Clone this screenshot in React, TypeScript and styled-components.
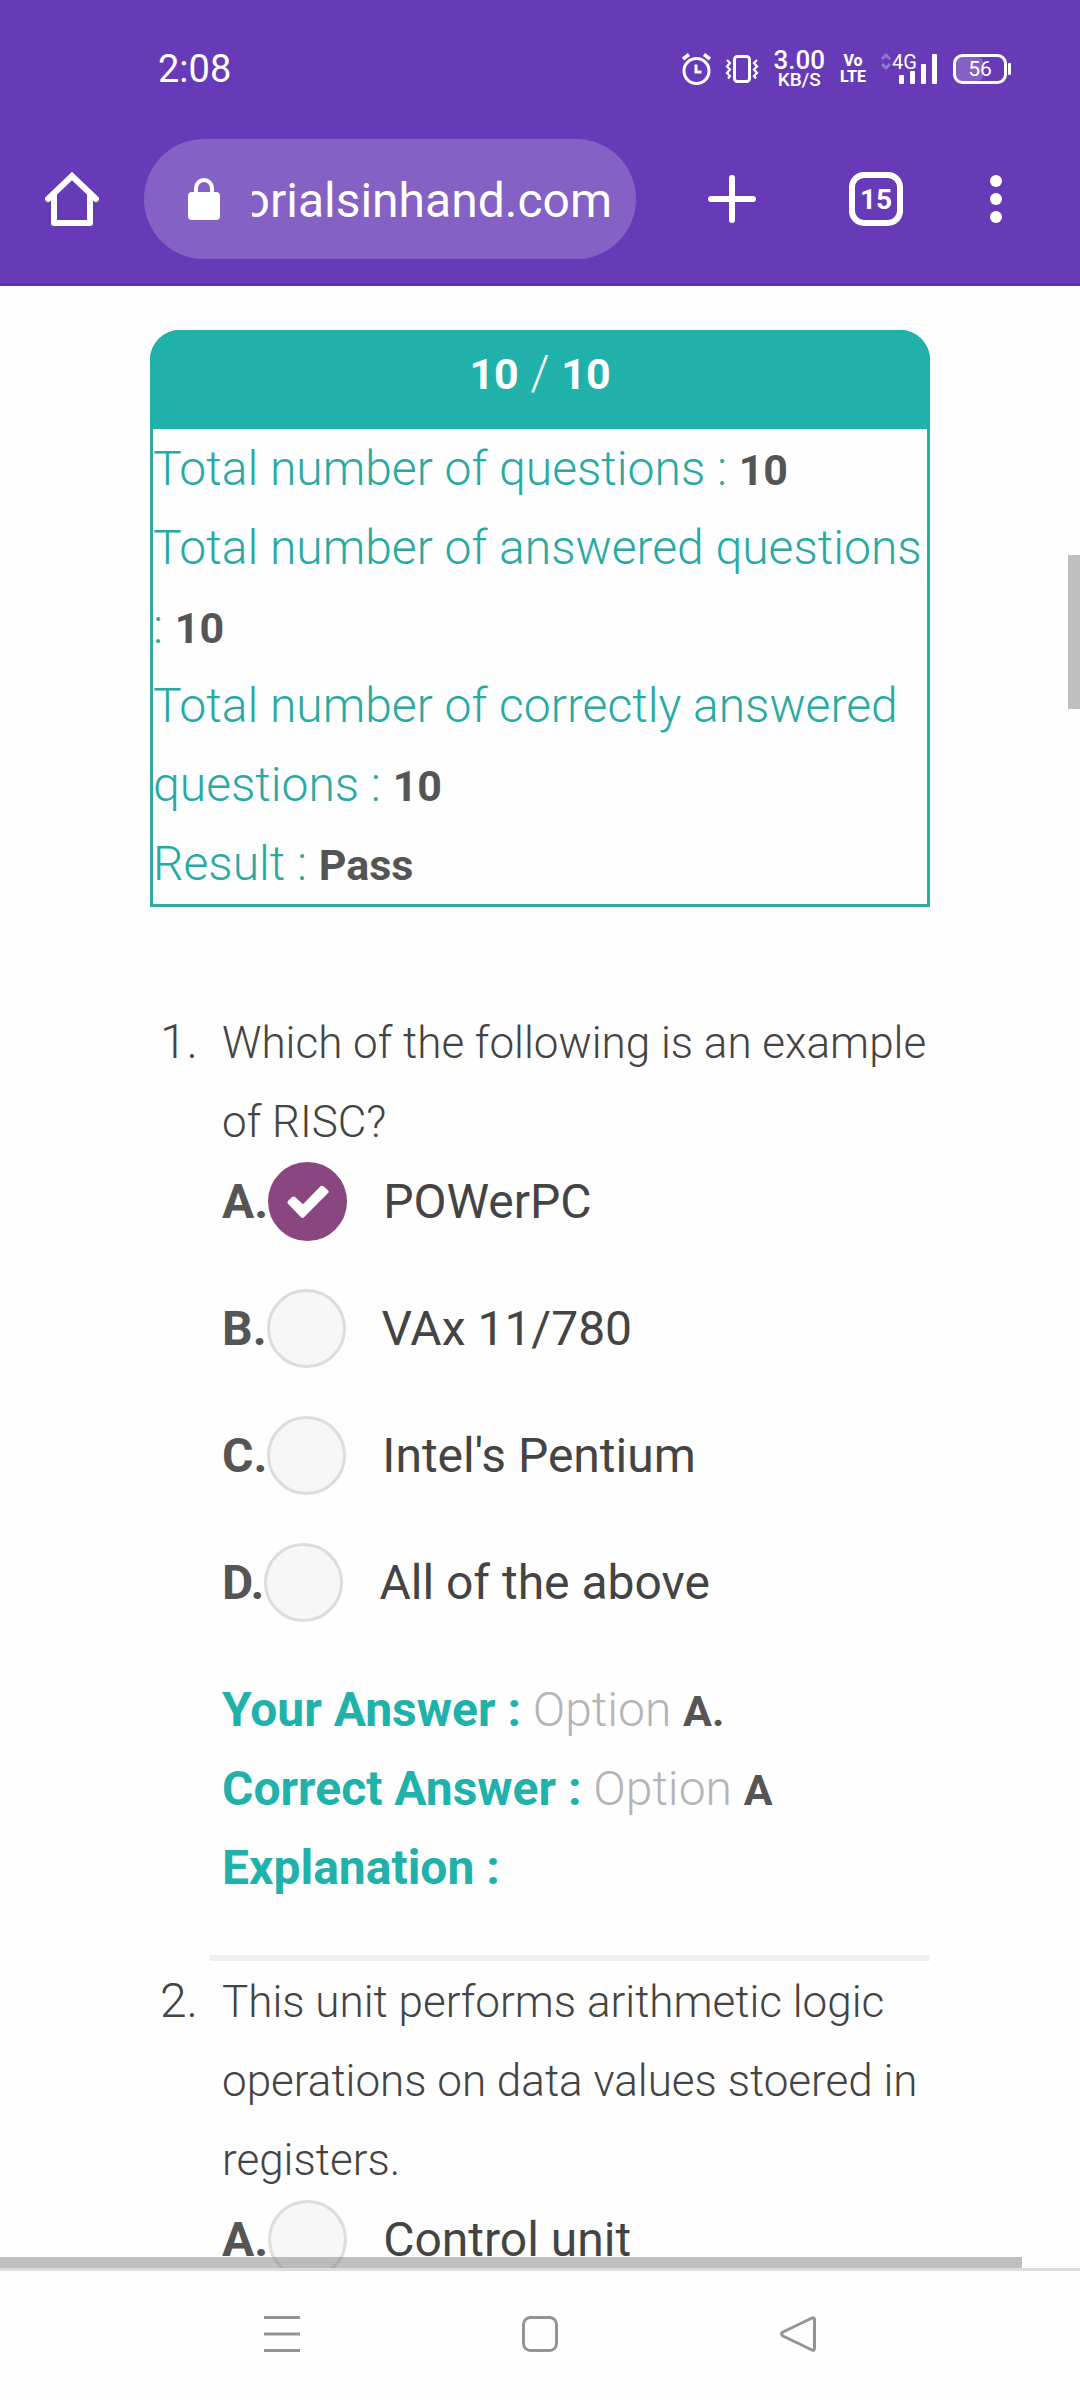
import React from 'react';
import styled, { createGlobalStyle } from 'styled-components';

const GlobalStyle = createGlobalStyle`
  *, *::before, *::after { box-sizing: border-box; }
  body {
    margin: 0;
    background: #fefefe;
    color: #444;
    font-family: Roboto, "Liberation Sans", sans-serif;
  }
`;

const Screen = styled.div`
  display: flex;
  flex-direction: column;
  height: 100vh;
  overflow: hidden;
`;

const Chrome = styled.header`
  flex: none;
  background: #673ab7;
  border-bottom: 3px solid #5c34a4;
  color: #fff;
`;

const StatusBar = styled.div`
  display: flex;
  align-items: center;
  height: 115px;
  padding: 23px 68px 0 158px;
`;

const Clock = styled.time`
  font-size: 38px;
  line-height: 40px;
`;

const StatusIcons = styled.div`
  display: flex;
  align-items: center;
  gap: 15px;
  margin-left: auto;

  svg { display: block; overflow: visible; }
`;

const Stack = styled.div<{ $size: number; $weight: number; $line: number }>`
  display: flex;
  flex-direction: column;
  align-items: center;
  font-size: ${(p) => p.$size}px;
  font-weight: ${(p) => p.$weight};
  line-height: ${(p) => p.$line}px;
`;

const Speed = styled.span`
  font-size: 26px;
  line-height: 21px;
`;

const Toolbar = styled.div`
  display: flex;
  align-items: center;
  height: 168px;
  padding-right: 36px;
`;

const IconButton = styled.button<{ $width?: number }>`
  display: flex;
  align-items: center;
  justify-content: center;
  flex: none;
  width: ${(p) => p.$width || 144}px;
  height: 120px;
  padding: 0;
  border: 0;
  background: none;
  color: inherit;
  font: inherit;
`;

const AddressBar = styled.label`
  display: flex;
  align-items: center;
  flex: 1;
  gap: 32px;
  min-width: 0;
  height: 120px;
  margin-right: 24px;
  padding: 0 24px 0 44px;
  border-radius: 60px;
  background: #8561c5;

  svg { flex: none; }
`;

const AddressInput = styled.input`
  flex: 1;
  min-width: 0;
  padding: 3px 0 0;
  border: 0;
  outline: 0;
  background: none;
  color: #fff;
  font: 400 48px/60px Roboto, "Liberation Sans", sans-serif;
  direction: rtl;
`;

const TabCount = styled.span`
  display: flex;
  align-items: center;
  justify-content: center;
  width: 54px;
  height: 54px;
  border: 6px solid #fff;
  border-radius: 15px;
  font-size: 28px;
  font-weight: 700;
`;

const Viewport = styled.main`
  position: relative;
  flex: 1;
  min-height: 0;
  overflow: hidden;
  padding: 44px 150px 0;
`;

const ScrollThumb = styled.div<{ $vertical?: boolean }>`
  position: absolute;
  right: ${(p) => (p.$vertical ? '0' : 'auto')};
  left: ${(p) => (p.$vertical ? 'auto' : '0')};
  top: ${(p) => (p.$vertical ? '269px' : 'auto')};
  bottom: ${(p) => (p.$vertical ? 'auto' : '0')};
  width: ${(p) => (p.$vertical ? '12px' : '1022px')};
  height: ${(p) => (p.$vertical ? '154px' : '11px')};
  background: rgba(128, 128, 128, 0.5);
`;

const ResultCard = styled.section`
  margin-bottom: 95px;
  padding-bottom: 1px;
  border: 3px solid #33aaa4;
  border-radius: 30px 30px 0 0;
  color: #28aaa4;
  font-size: 48px;
  font-weight: 300;
  line-height: 79px;
`;

const ResultHeading = styled.h2`
  margin: -3px -3px 0;
  padding: 3px 0 17px;
  border-radius: 30px 30px 0 0;
  background: #20b2aa;
  color: #fff;
  font-size: 48px;
  font-weight: 300;
  text-align: center;
`;

const ResultLine = styled.p`
  margin: 0;
`;

const Strong = styled.strong<{ $color?: string }>`
  color: ${(p) => p.$color || '#555'};
  font-size: 43px;
  font-weight: 700;
  line-height: 48px;
`;

const QuestionList = styled.ol`
  margin: 0;
  padding: 0;
  list-style: none;
`;

const QuestionItem = styled.li`
  display: grid;
  grid-template-columns: 60px 1fr;
  align-items: baseline;
  line-height: 79px;
`;

const QuestionNumber = styled.span`
  padding-right: 12px;
  font-size: 48px;
  font-weight: 300;
  text-align: right;
`;

const QuestionBody = styled.div`
  padding: 0 0 48px 12px;
  border-bottom: 6px solid #f0f0f0;
`;

const QuestionText = styled.p`
  margin: 0;
  font-size: 44px;
  font-weight: 300;
`;

const Options = styled.div`
  display: flex;
  flex-direction: column;
  gap: 48px;
  margin-bottom: 48px;
`;

const Option = styled.label`
  display: flex;
  align-items: center;
  height: 79px;
  font-size: 48px;
`;

const OptionLetter = styled.b`
  color: #555;
`;

const RadioCell = styled.span`
  display: grid;
  place-items: center;
  margin-right: 36px;

  > * { grid-area: 1 / 1; }
`;

const Radio = styled.input`
  appearance: none;
  width: 79px;
  height: 79px;
  margin: 0;
  border: 3px solid #ddd;
  border-radius: 50%;
  background: #f7f7f7;

  &:checked {
    border-color: #8a4680;
    background: #8a4680;
  }
`;

const AnswerLine = styled.p`
  margin: 0;
  color: #b5b5b5;
  font-size: 48px;
  font-weight: 300;
`;

const AnswerLabel = styled.b`
  color: #20b2aa;
  font-weight: 700;
`;

const NavBar = styled.nav`
  display: flex;
  align-items: center;
  justify-content: center;
  flex: none;
  gap: 114px;
  height: 132px;
  padding-bottom: 3px;
  border-top: 3px solid #ddd;
  color: #949494;
`;

const AlarmIcon = () => (
  <svg width="29" height="32" viewBox="0 0 29 32" fill="none" stroke="#fff" strokeWidth="3">
    <circle cx="14.500" cy="18" r="12.500" />
    <path d="M14 11.500V19h5.500" />
    <path d="M1 6l6-4.500M28 6l-6-4.500" strokeWidth="3.500" />
  </svg>
);

const VibrateIcon = () => (
  <svg width="32" height="28" viewBox="0 0 32 28" fill="none" stroke="#fff" strokeWidth="3">
    <rect x="8.500" y="1.500" width="15" height="25" rx="3" />
    <path d="M1 5l3 3-3 3.500 3 3-3 3.500 3 3-2 2.500M31 5l-3 3 3 3.500-3 3 3 3.500-3 3 2 2.500" strokeWidth="2.200" />
  </svg>
);

const SignalIcon = () => (
  <svg width="57" height="32" viewBox="0 0 57 32" role="img" aria-label="4G signal">
    <path d="M1 6l4-4 4 4M1 11l4 4 4-4" fill="none" stroke="#9575cd" strokeWidth="3" />
    <text x="11" y="16" fill="#fff" fontSize="20" fontFamily="Roboto, sans-serif">4G</text>
    <g fill="#fff">
      <rect x="18" y="22" width="5" height="9" rx="1" />
      <rect x="29" y="18" width="5" height="13" rx="1" />
      <rect x="40" y="11" width="5" height="20" rx="1" />
      <rect x="51" y="1" width="5" height="30" rx="1" />
    </g>
  </svg>
);

const BatteryIcon = () => (
  <svg width="59" height="30" viewBox="0 0 59 30" role="img" aria-label="Battery 56 percent">
    <rect x="3" y="3" width="27" height="24" rx="5" fill="#8561c5" />
    <rect x="1.500" y="1.500" width="51" height="27" rx="8" fill="none" stroke="#fff" strokeWidth="3" />
    <rect x="55" y="9" width="3" height="12" rx="1" fill="#fff" />
    <text x="27" y="22" fill="#fff" fontSize="21" textAnchor="middle" fontFamily="Roboto, sans-serif">56</text>
  </svg>
);

const HomeIcon = () => (
  <svg width="54" height="54" viewBox="0 0 54 54" fill="none" stroke="#fff" strokeWidth="6" strokeLinecap="round" strokeLinejoin="round">
    <path d="M3 27L27 4 51 27" strokeLinejoin="miter" />
    <path d="M9 23v28h36V23" />
  </svg>
);

const LockIcon = () => (
  <svg width="32" height="42" viewBox="0 0 32 42" aria-hidden="true">
    <path d="M8 16V10a8 8 0 0 1 16 0v6" fill="none" stroke="#fff" strokeWidth="4" />
    <rect y="14" width="32" height="28" rx="4" fill="#fff" />
  </svg>
);

const CheckIcon = () => (
  <svg width="42" height="34" viewBox="0 0 42 38" preserveAspectRatio="none" fill="#fff" aria-hidden="true">
    <path d="M16.500 36.500q-1 1-2 0L1 21q-1-1.500 0-3l4-4.500q1.500-1.500 3 0l8 8L33.500 1.500q1.500-1.500 3 0L41 6q1.500 1.500 0 3z" />
  </svg>
);

interface QuestionData {
  text: string;
  name: string;
  options: string[];
  checked?: number;
  answer?: { yours: string; correct: string };
}

const questions: QuestionData[] = [
  {
    text: 'Which of the following is an example of RISC?',
    name: 'q1',
    options: ['POWerPC', 'VAx 11/780', "Intel's Pentium", 'All of the above'],
    checked: 0,
    answer: { yours: 'A.', correct: 'A' },
  },
  {
    text: 'This unit performs arithmetic logic operations on data values stoered in registers.',
    name: 'q2',
    options: ['Control unit'],
  },
];

const results: [string, string][] = [
  ['Total number of questions', '10'],
  ['Total number of answered questions', '10'],
  ['Total number of correctly answered questions', '10'],
  ['Result', 'Pass'],
];

export default function App() {
  return (
    <>
      <GlobalStyle />
      <Screen>
        <Chrome>
          <StatusBar>
            <Clock>2:08</Clock>
            <StatusIcons>
              <AlarmIcon />
              <VibrateIcon />
              <Stack $size={19} $weight={500} $line={17}>
                <Speed>3.00</Speed>
                <span>KB/S</span>
              </Stack>
              <Stack $size={16} $weight={800} $line={16}>
                <span>Vo</span>
                <span>LTE</span>
              </Stack>
              <SignalIcon />
              <BatteryIcon />
            </StatusIcons>
          </StatusBar>
          <Toolbar>
            <IconButton aria-label="Home"><HomeIcon /></IconButton>
            <AddressBar>
              <LockIcon />
              <AddressInput aria-label="Address" readOnly value="tutorialsinhand.com" />
            </AddressBar>
            <IconButton aria-label="New tab">
              <svg width="48" height="48" viewBox="0 0 48 48" stroke="#fff" strokeWidth="6" strokeLinecap="round">
                <path d="M24 3v42M3 24h42" />
              </svg>
            </IconButton>
            <IconButton aria-label="Tabs"><TabCount>15</TabCount></IconButton>
            <IconButton aria-label="Menu" $width={96}>
              <svg width="12" height="48" viewBox="0 0 12 48" fill="#fff">
                <circle cx="6" cy="6" r="6" />
                <circle cx="6" cy="24" r="6" />
                <circle cx="6" cy="42" r="6" />
              </svg>
            </IconButton>
          </Toolbar>
        </Chrome>

        <Viewport>
          <ResultCard>
            <ResultHeading>
              <Strong $color="#fff">10</Strong> / <Strong $color="#fff">10</Strong>
            </ResultHeading>
            {results.map(([label, value]) => (
              <ResultLine key={label}>
                {label} : <Strong>{value}</Strong>
              </ResultLine>
            ))}
          </ResultCard>

          <QuestionList>
            {questions.map((q, i) => (
              <QuestionItem key={q.name}>
                <QuestionNumber>{i + 1}.</QuestionNumber>
                <QuestionBody>
                  <QuestionText>{q.text}</QuestionText>
                  <Options>
                    {q.options.map((option, n) => (
                      <Option key={option}>
                        <OptionLetter>{'ABCD'[n]}.</OptionLetter>
                        <RadioCell>
                          <Radio type="radio" name={q.name} defaultChecked={q.checked === n} />
                          {q.checked === n && <CheckIcon />}
                        </RadioCell>
                        {option}
                      </Option>
                    ))}
                  </Options>
                  {q.answer && (
                    <>
                      <AnswerLine>
                        <AnswerLabel>Your Answer :</AnswerLabel> Option <Strong>{q.answer.yours}</Strong>
                      </AnswerLine>
                      <AnswerLine>
                        <AnswerLabel>Correct Answer :</AnswerLabel> Option <Strong>{q.answer.correct}</Strong>
                      </AnswerLine>
                      <AnswerLine>
                        <AnswerLabel>Explanation :</AnswerLabel>
                      </AnswerLine>
                    </>
                  )}
                </QuestionBody>
              </QuestionItem>
            ))}
          </QuestionList>
          <ScrollThumb $vertical />
          <ScrollThumb />
        </Viewport>

        <NavBar>
          <IconButton aria-label="Recent apps">
            <svg width="36" height="36" viewBox="0 0 36 36" stroke="currentColor" strokeWidth="3">
              <path d="M0 1.500h36M0 18h36M0 34.500h36" />
            </svg>
          </IconButton>
          <IconButton aria-label="Home screen">
            <svg width="36" height="36" viewBox="0 0 36 36" fill="none" stroke="currentColor" strokeWidth="3">
              <rect x="1.500" y="1.500" width="33" height="33" rx="7" />
            </svg>
          </IconButton>
          <IconButton aria-label="Back">
            <svg width="36" height="36" viewBox="0 0 36 36" fill="none" stroke="currentColor" strokeWidth="3" strokeLinejoin="round">
              <path d="M32 2L3 16q-3 2 0 4L32 34q2.500 1 2.500-2V4q0-3-2.500-2z" />
            </svg>
          </IconButton>
        </NavBar>
      </Screen>
    </>
  );
}
